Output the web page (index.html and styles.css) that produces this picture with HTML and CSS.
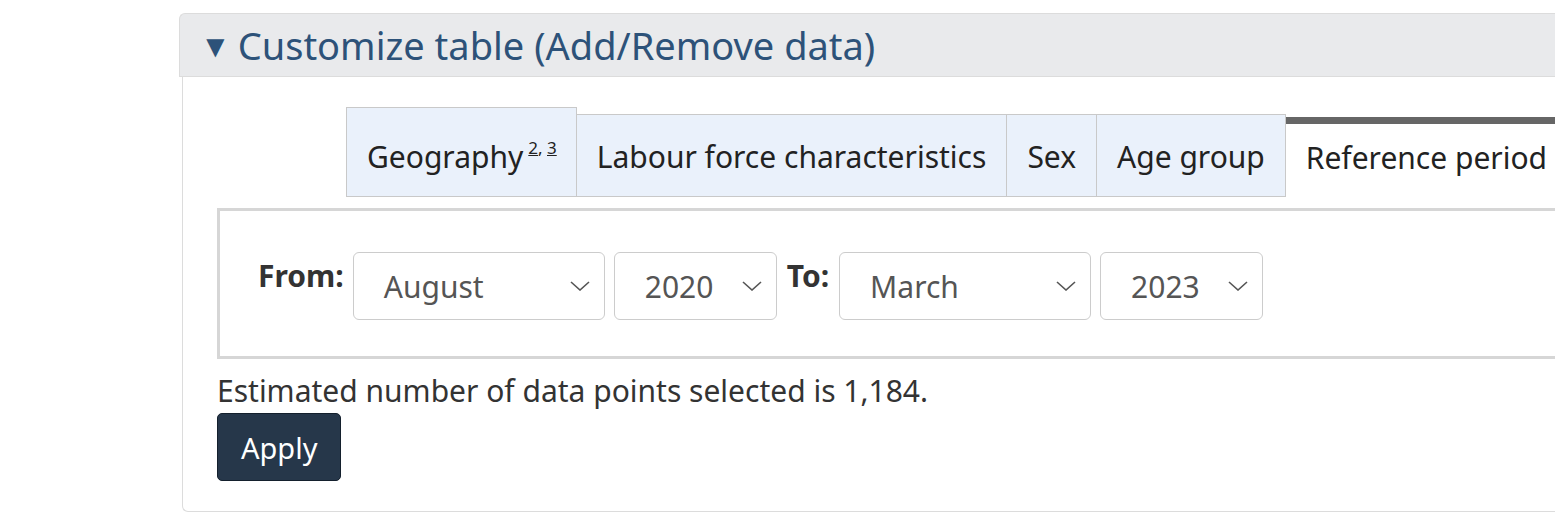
FILE: index.html
```html
<!DOCTYPE html>
<html lang="en">
<head>
<meta charset="utf-8">
<title>Customize table</title>
<link rel="stylesheet" href="styles.css">
</head>
<body>
<div class="card">
  <div class="summary"><span class="tri">▼</span>Customize table (Add/Remove data)</div>
  <div class="content">
    <div class="tabs">
      <div class="tab tab-geo">Geography<sup><a href="#">2</a>, <a href="#">3</a></sup></div>
      <div class="tab">Labour force characteristics</div>
      <div class="tab">Sex</div>
      <div class="tab">Age group</div>
      <div class="tab active">Reference period</div>
    </div>
    <div class="panel">
      <span class="lbl">From:</span>
      <div class="select wide"><span>August</span><svg viewBox="0 0 20 10" width="20" height="10"><path d="M1 1 L10 9 L19 1" /></svg></div>
      <div class="select narrow"><span>2020</span><svg viewBox="0 0 20 10" width="20" height="10"><path d="M1 1 L10 9 L19 1" /></svg></div>
      <span class="lbl lbl-to">To:</span>
      <div class="select wide"><span>March</span><svg viewBox="0 0 20 10" width="20" height="10"><path d="M1 1 L10 9 L19 1" /></svg></div>
      <div class="select narrow"><span>2023</span><svg viewBox="0 0 20 10" width="20" height="10"><path d="M1 1 L10 9 L19 1" /></svg></div>
    </div>
    <p class="estimate">Estimated number of data points selected is 1,184.</p>
    <button class="apply" type="button">Apply</button>
  </div>
</div>
</body>
</html>
```
FILE: styles.css
```css
html, body {
  margin: 0;
  padding: 0;
  background: #fff;
  overflow: hidden;
}
body {
  font-family: "Noto Sans", "Open Sans", sans-serif;
  color: #333;
}
.card {
  margin: 13px 0 0 179px;
  width: 1500px;
}
.summary {
  box-sizing: border-box;
  height: 64px;
  background: #e9eaec;
  border-top: 1px solid #dcdcdc;
  border-left: 1px solid #dcdcdc;
  border-bottom: 1px solid #dcdcdc;
  border-top-left-radius: 6px;
  padding-left: 20px;
  color: #2d5279;
  font-size: 38px;
  line-height: 60px;
  display: flex;
  align-items: center;
}
.tri {
  font-size: 31px;
  margin-right: 7px;
}
.content {
  margin-left: 3px;
  border-left: 1px solid #dcdcdc;
  border-bottom: 1px solid #dcdcdc;
  border-bottom-left-radius: 6px;
  padding: 30px 0 30px 34px;
}
.tabs {
  display: flex;
  align-items: flex-end;
  margin-left: 129px;
  margin-bottom: 11px;
}
.tab {
  background: #eaf1fb;
  border: 1px solid #c9c9c9;
  border-left: none;
  padding: 21px 20px 19px;
  font-size: 30px;
  line-height: 41px;
  color: #222;
  white-space: nowrap;
}
.tab-geo {
  border-left: 1px solid #c9c9c9;
  padding-top: 28px;
  padding-right: 19px;
}
.tab sup {
  font-size: 17px;
  line-height: 0;
  margin-left: 5px;
  vertical-align: 14px;
}
.tab sup a {
  color: #222;
}
.tab.active {
  background: #fff;
  border: none;
  border-top: 7px solid #666;
  padding: 13px 20px 19px;
}
.panel {
  border: 3px solid #d6d6d6;
  border-right: none;
  display: flex;
  align-items: flex-start;
  padding: 41px 0 36px 38px;
}
.lbl {
  font-weight: 700;
  font-size: 30px;
  line-height: 36px;
  margin-top: 6px;
  margin-right: 9px;
}
.lbl-to {
  margin-left: 1px;
  margin-right: 10px;
}
.select {
  box-sizing: border-box;
  height: 68px;
  border: 1px solid #ccc;
  border-radius: 6px;
  display: flex;
  align-items: center;
  justify-content: space-between;
  padding: 0 14px 0 30px;
  margin-right: 9px;
  color: #555;
  font-size: 30px;
}
.select svg path {
  fill: none;
  stroke: #555;
  stroke-width: 1.6;
}
.select.wide { width: 252px; }
.select.narrow { width: 163px; }
.estimate {
  margin: 11px 0 0 0;
  font-size: 30px;
  line-height: 41px;
}
.apply {
  display: block;
  margin-top: 2px;
  background: #26374a;
  color: #fff;
  border: 1px solid #14202d;
  border-radius: 5px;
  font-family: "Noto Sans", "Open Sans", sans-serif;
  font-size: 29px;
  height: 68px;
  padding: 0 23px;
}
```
